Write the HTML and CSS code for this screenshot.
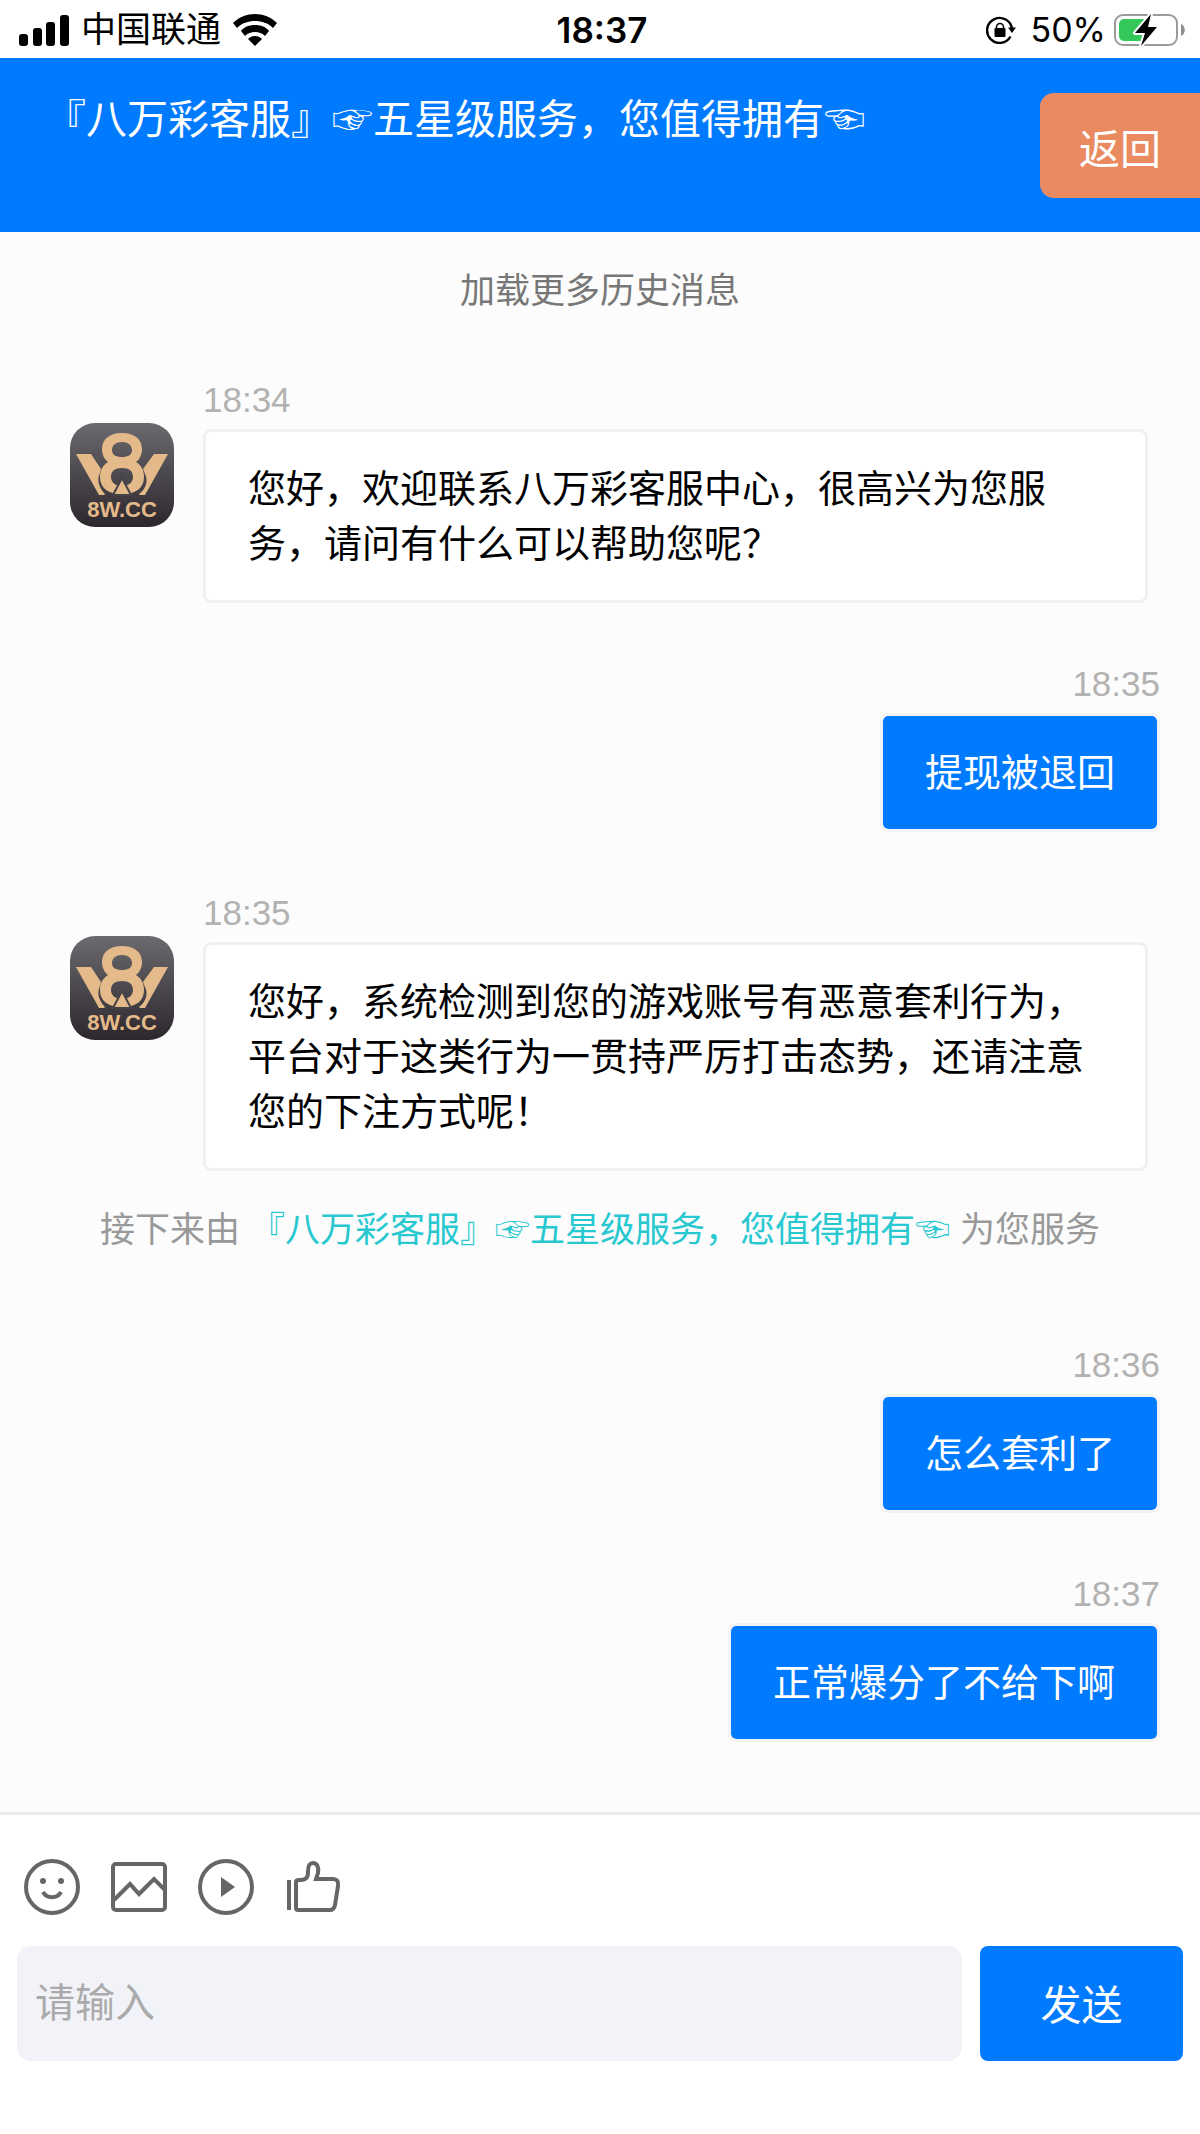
FILE: index.html
```html
<!DOCTYPE html>
<html lang="zh-CN">
<head>
<meta charset="utf-8">
<meta name="viewport" content="width=device-width, initial-scale=1">
<title>八万彩客服</title>
<link rel="stylesheet" href="styles.css">
</head>
<body>
<svg class="defs" width="0" height="0" aria-hidden="true">
  <defs>
    <linearGradient id="avatar-bg" x1="0" y1="0" x2="0" y2="1">
      <stop offset="0" stop-color="#6b6a6f"/>
      <stop offset="1" stop-color="#2c272c"/>
    </linearGradient>
    <symbol id="avatar" viewBox="0 0 104 104">
      <rect width="104" height="104" rx="25" fill="url(#avatar-bg)"/>
      <g fill="#e5ba8a">
        <path d="M6 31h15l10 15-1 4c-3 6-2 14 5 21l-1 1h-5z"/>
        <path d="M98 31H84L73 46l2 5c3 6 2 14-6 20l1 1h5z"/>
        <path fill-rule="evenodd" d="M52 10c12 0 20 6 20 16 0 5-2 10-6 13 5 3 8 8 8 15 0 11-8 17-22 17S30 65 30 54c0-7 3-12 8-15-4-3-6-8-6-13 0-10 8-16 20-16zm0 9c-6 0-10 3-10 8s4 7 10 7 10-2 10-7-4-8-10-8zm0 26c-7 0-11 3-11 9 0 5 4 9 11 9s11-4 11-9c0-6-4-9-11-9z"/>
      </g>
      <path d="M52 55l9 17H43z" fill="#e5ba8a" stroke="#454247" stroke-width="2"/>
      <text x="52" y="94" text-anchor="middle" class="avatar-text">8W.CC</text>
    </symbol>
  </defs>
</svg>
<div class="app">
  <div class="status">
    <div class="status-side">
      <svg width="50" height="31" viewBox="0 0 50 31" aria-hidden="true">
        <rect y="19" width="9" height="12" rx="3"/><rect x="14" y="13" width="9" height="18" rx="3"/><rect x="27" y="7" width="9" height="24" rx="3"/><rect x="41" width="9" height="31" rx="3"/>
      </svg>
      <span class="carrier">中国联通</span>
      <svg width="44" height="32" viewBox="0 0 44 32" aria-hidden="true">
        <path d="M22 0c8 0 16 3 22 9l-4 5c-5-5-11-7-18-7S9 9 4 14L0 9c6-6 14-9 22-9z"/>
        <path d="M22 11c6 0 11 2 14 6l-4 5c-3-3-6-4-10-4s-7 1-10 4l-4-5c3-4 8-6 14-6z"/>
        <path d="M22 22c3 0 5 1 7 3l-7 7-7-7c2-2 4-3 7-3z"/>
      </svg>
    </div>
    <time class="clock">18:37</time>
    <div class="status-side status-right">
      <svg width="30" height="28" viewBox="0 0 30 28" aria-hidden="true">
        <path d="M26 13A12.500 12.500 0 1 0 24.500 20.500" fill="none" stroke="#000" stroke-width="2.400"/>
        <path d="M22 11.500h8L26 17z"/>
        <rect x="8.500" y="12" width="11" height="9" rx="1"/>
        <path d="M10.500 13v-2a3.500 3.500 0 0 1 7 0v2" fill="none" stroke="#000" stroke-width="1.600"/>
      </svg>
      <span class="percent">50%</span>
      <svg width="71" height="34" viewBox="0 0 71 34" aria-hidden="true">
        <rect x="1" y="2" width="62" height="30" rx="8" fill="none" stroke="#9b9b9b" stroke-width="2"/>
        <path d="M67 11c5 2 5 10 0 12z" fill="#8e8e8e"/>
        <rect x="5" y="6" width="29" height="22" rx="5" fill="#34c759"/>
        <path d="M37 1L21 20h10l-4 13 16-19H34z" stroke="#fff" stroke-width="4" stroke-linejoin="round"/>
        <path d="M37 1L21 20h10l-4 13 16-19H34z"/>
      </svg>
    </div>
  </div>

  <header class="header">
    <h1 class="title">『八万彩客服』☞五星级服务，您值得拥有☜</h1>
    <button class="back" type="button">返回</button>
  </header>

  <main class="chat">
    <button class="more" type="button">加载更多历史消息</button>

    <article class="message">
      <svg class="avatar" role="img" aria-label="客服头像"><use href="#avatar"/></svg>
      <div class="body">
        <time class="time">18:34</time>
        <p class="bubble">您好，欢迎联系八万彩客服中心，很高兴为您服务，请问有什么可以帮助您呢？</p>
      </div>
    </article>

    <article class="message mine">
      <time class="time">18:35</time>
      <p class="bubble">提现被退回</p>
    </article>

    <article class="message">
      <svg class="avatar" role="img" aria-label="客服头像"><use href="#avatar"/></svg>
      <div class="body">
        <time class="time">18:35</time>
        <p class="bubble">您好，系统检测到您的游戏账号有恶意套利行为，平台对于这类行为一贯持严厉打击态势，还请注意您的下注方式呢！</p>
      </div>
    </article>

    <p class="notice"><span>接下来由</span><span class="agent">『八万彩客服』☞五星级服务，您值得拥有☜</span><span>为您服务</span></p>

    <article class="message mine">
      <time class="time">18:36</time>
      <p class="bubble">怎么套利了</p>
    </article>

    <article class="message mine">
      <time class="time">18:37</time>
      <p class="bubble">正常爆分了不给下啊</p>
    </article>
  </main>

  <footer class="footer">
    <div class="tools">
      <button class="tool" type="button" aria-label="表情">
        <svg viewBox="0 0 56 56"><circle cx="28" cy="28" r="26"/><path d="M19 33c4 7 14 7 18 0"/><circle class="solid" cx="19" cy="22" r="3"/><circle class="solid" cx="37" cy="22" r="3"/></svg>
      </button>
      <button class="tool" type="button" aria-label="图片">
        <svg viewBox="0 0 56 56"><rect x="2" y="5" width="52" height="46" rx="3"/><path d="M3 41l16-16 9 10 15-15 11 11"/></svg>
      </button>
      <button class="tool" type="button" aria-label="视频">
        <svg viewBox="0 0 56 56"><circle cx="28" cy="28" r="26"/><path class="solid" d="M23 18v20l14-10z"/></svg>
      </button>
      <button class="tool" type="button" aria-label="评价">
        <svg viewBox="0 0 56 56"><path d="M4 21v30M11 23q0-2 3-2c7 0 9-2 9-8 0-6 1-9 5-9s6 4 5 10l-2 6h17q6 0 5 7l-3 19q-1 5-5 5H13q-2 0-2-2z"/></svg>
      </button>
    </div>
    <form class="composer">
      <input class="field" type="text" placeholder="请输入" aria-label="请输入">
      <button class="send" type="button">发送</button>
    </form>
  </footer>
</div>
</body>
</html>
```
FILE: styles.css
```css
* {
  box-sizing: border-box;
}

body {
  margin: 0;
  background: #fff;
  color: #000;
  font-family: "Liberation Sans", "Noto Sans CJK SC", "DejaVu Sans", sans-serif;
  font-weight: 400;
}

button {
  padding: 0;
  border: 0;
  background: none;
  color: inherit;
  font: inherit;
}

h1,
p {
  margin: 0;
}

.defs {
  display: block;
}

.app {
  display: flex;
  flex-direction: column;
  min-height: 100vh;
}

/* Status bar */
.status {
  display: grid;
  grid-template-columns: 1fr auto 1fr;
  align-items: center;
  height: 58px;
  padding: 2px 15px 0 19px;
}

.status-side {
  display: flex;
  align-items: center;
  gap: 12px;
}

.status-right {
  justify-content: flex-end;
  gap: 8px;
}

.status-right .percent {
  padding-left: 6px;
}

.carrier {
  font-size: 35px;
  line-height: 50px;
}

.clock {
  font: 600 35px/50px Inter, sans-serif;
}

.percent {
  font: 400 34px/50px Inter, sans-serif;
}

/* Header */
.header {
  display: flex;
  justify-content: space-between;
  align-items: flex-start;
  min-height: 174px;
  padding: 35px 0 34px 45px;
  background: #007aff;
  color: #fff;
}

.title {
  padding-top: 2px;
  font-size: 41px;
  font-weight: 400;
  line-height: 50px;
}

.back {
  flex: none;
  width: 160px;
  height: 105px;
  border-radius: 14px 0 0 14px;
  background: #e98a60;
  font-size: 41px;
}

/* Conversation */
.chat {
  display: flex;
  flex: 1;
  flex-direction: column;
  gap: 61px;
  padding: 34px 40px 70px 70px;
  background: #fcfcfc;
}

.more {
  align-self: center;
  margin: 0 0 3px -30px;
  color: #777;
  font-size: 35px;
  line-height: 50px;
}

.message {
  display: flex;
  gap: 29px;
}

.avatar {
  flex: none;
  width: 104px;
  height: 104px;
  margin-top: 43px;
}

.avatar-text {
  fill: #e5ba8a;
  font: 700 22px "Liberation Sans", sans-serif;
}

.body {
  flex: 1;
  margin-right: 12px;
}

.time {
  display: block;
  margin-bottom: 9px;
  color: #b2b2b2;
  font-size: 35px;
  line-height: 40px;
}

.bubble {
  padding: 30px 42px 28px;
  border: 3px solid #f0f0f0;
  border-radius: 8px;
  background: #fff;
  font-size: 38px;
  line-height: 55px;
}

.mine {
  flex-direction: column;
  align-items: flex-end;
  gap: 0;
}

.mine .bubble {
  border-color: #f3f3f3;
  background: #007aff;
  background-clip: padding-box;
  color: #fff;
}

.notice {
  display: flex;
  justify-content: center;
  gap: 10px;
  margin: -27px 0 29px -30px;
  color: #999;
  font-size: 35px;
  line-height: 50px;
  white-space: nowrap;
}

.agent {
  color: #27c8d0;
}

/* Composer */
.footer {
  padding: 44px 17px 73px;
  border-top: 3px solid #ececec;
}

.tools {
  display: flex;
  gap: 31px;
  margin-bottom: 31px;
  padding-left: 7px;
}

.tool {
  width: 56px;
  height: 56px;
}

.tool svg {
  display: block;
  fill: none;
  stroke: #666;
  stroke-width: 4;
}

.tool .solid {
  fill: #666;
  stroke: none;
}

.composer {
  display: flex;
  gap: 18px;
}

.field {
  flex: 1;
  min-width: 0;
  height: 115px;
  padding: 0 18px;
  border: 0;
  border-radius: 14px;
  background: #f2f3f8;
  font: inherit;
  font-size: 40px;
}

.field::placeholder {
  color: #aaa;
  opacity: 1;
}

.send {
  width: 203px;
  padding-bottom: 4px;
  border-radius: 8px;
  background: #007aff;
  color: #fff;
  font-size: 41px;
}
```
